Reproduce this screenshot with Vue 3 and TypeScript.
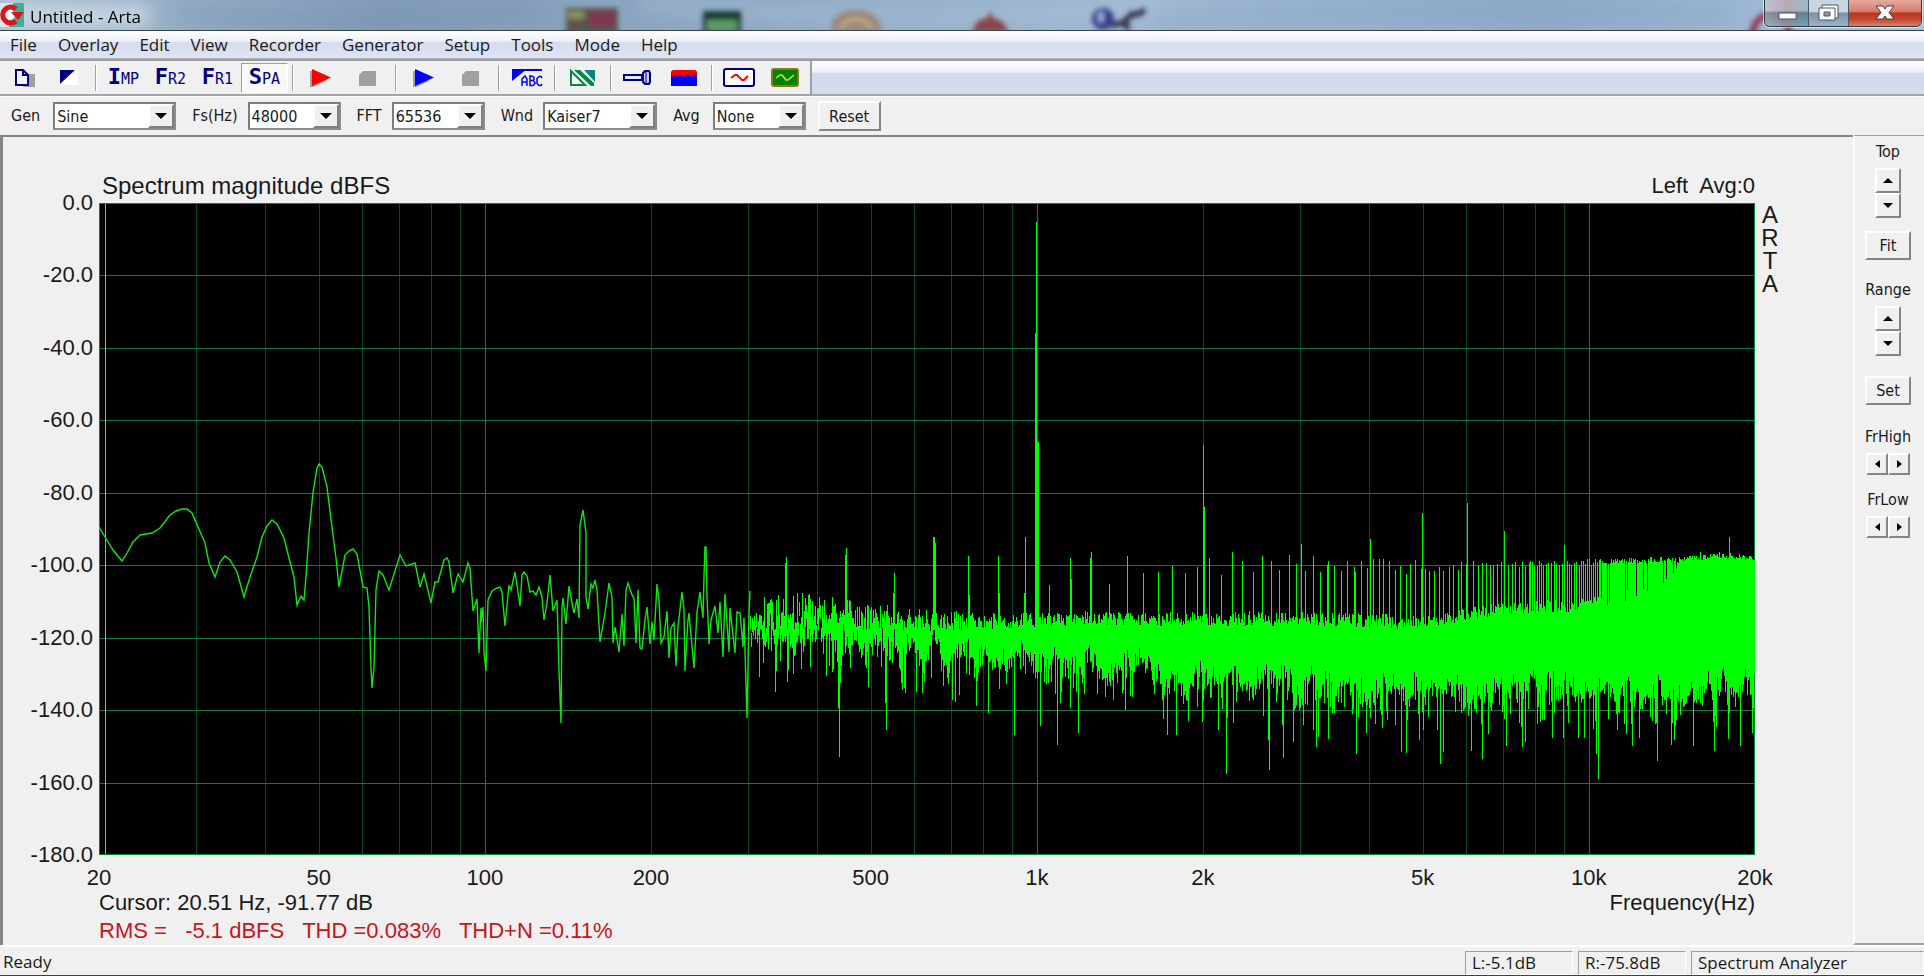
<script setup lang="ts">
import { ref } from 'vue'

const menus = ['File', 'Overlay', 'Edit', 'View', 'Recorder', 'Generator', 'Setup', 'Tools', 'Mode', 'Help']

type Tool = { id: string; label: string; big?: string; small?: string; pressed?: boolean }
const toolGroups: Tool[][] = [
  [{ id: 'copy', label: 'Copy' }, { id: 'invert', label: 'Black and white background' }],
  [
    { id: 'imp', label: 'Impulse response', big: 'I', small: 'MP' },
    { id: 'fr2', label: 'Two channel response', big: 'F', small: 'R2' },
    { id: 'fr1', label: 'Single channel response', big: 'F', small: 'R1' },
    { id: 'spa', label: 'Spectrum analyzer', big: 'S', small: 'PA', pressed: true },
  ],
  [{ id: 'rec', label: 'Start recording' }, { id: 'stop', label: 'Stop recording' }],
  [{ id: 'play', label: 'Start generator' }, { id: 'stop', label: 'Stop generator' }],
  [{ id: 'abc', label: 'Weighting' }],
  [{ id: 'cal', label: 'Calibration' }],
  [{ id: 'mic', label: 'Microphone' }, { id: 'level', label: 'Level meter' }],
  [{ id: 'signal', label: 'Signal' }, { id: 'scope', label: 'Scope' }],
]

const combos = ref([
  { id: 'gen', label: 'Gen', value: 'Sine', options: ['Sine', 'White PN', 'Pink PN'] },
  { id: 'fs', label: 'Fs(Hz)', value: '48000', options: ['44100', '48000', '96000'] },
  { id: 'fft', label: 'FFT', value: '65536', options: ['16384', '32768', '65536'] },
  { id: 'wnd', label: 'Wnd', value: 'Kaiser7', options: ['Uniform', 'Hanning', 'Kaiser7'] },
  { id: 'avg', label: 'Avg', value: 'None', options: ['None', 'Linear', 'Exp'] },
])

const channelText = 'Left  Avg:0'
const brandText = 'A\nR\nT\nA'
const distortionText = 'RMS =   -5.1 dBFS   THD =0.083%   THD+N =0.11%'

const W = 1656
const H = 652
const fx = (f: number): number => (Math.log10(f / 20) / 3) * W
const freqTicks = [
  { f: 20, t: '20' }, { f: 50, t: '50' }, { f: 100, t: '100' }, { f: 200, t: '200' }, { f: 500, t: '500' },
  { f: 1000, t: '1k' }, { f: 2000, t: '2k' }, { f: 5000, t: '5k' }, { f: 10000, t: '10k' }, { f: 20000, t: '20k' },
]
const levelTicks = [0, 20, 40, 60, 80, 100, 120, 140, 160, 180]
const minorFreqs: number[] = []
for (const d of [10, 100, 1000, 10000]) {
  for (let k = 2; k < 10; k++) {
    const f = d * k
    if (f > 20 && f < 20000) minorFreqs.push(f)
  }
}
const crisp = (v: number): number => Math.round(v) + 0.5
const minorPath = minorFreqs.map((f) => `M${crisp(fx(f))} 0V${H}`).join('')
const majorPath =
  [100, 1000, 10000].map((f) => `M${crisp(fx(f))} 0V${H}`).join('') +
  levelTicks.slice(1, -1).map((l) => `M0 ${crisp((l / 180) * H)}H${W}`).join('')

// Low-frequency bins, wide enough apart to be drawn one by one.
const lowBins =
  '0,324 6,334 14,347 23,358 28,350 34,339 41,332 53,330 61,325 71,312 77,308 83,306 88,306 93,310 99,324 106,340 110,360 116,374 ' +
  '121,359 126,353 131,357 138,369 145,394 151,374 158,354 163,334 168,323 173,317 178,321 185,335 191,359 195,374 198,402 ' +
  '202,393 205,397 207,374 210,330 214,290 218,265 220,261 223,264 228,284 233,324 237,355 240,384 246,352 250,348 254,346 258,351 ' +
  '264,384 268,385 270,404 272,465 273,485 275,464 277,387 280,368 284,372 290,387 301,352 307,363 316,360 321,384 325,371 ' +
  '332,400 336,379 339,379 345,357 348,355 350,359 354,390 359,371 364,379 369,360 371,365 374,408 378,396 380,450 382,405 ' +
  '382,420 384,404 385,450 387,468 389,397 393,388 398,385 401,384 403,389 406,423 410,382 412,387 416,369 421,403 423,372 ' +
  '425,369 428,373 431,389 434,388 437,392 440,384 443,394 445,417 448,400 451,372 454,408 458,397 460,467 462,520 463,404 ' +
  '464,395 467,421 470,383 473,400 475,410 478,396 480,415 481,322 483,312 484,307 487,330 487,394 489,406 492,381 494,385 ' +
  '496,377 498,387 501,439 506,410 510,380 513,394 514,440 516,424 520,449 523,411 525,443 527,387 529,380 533,392 535,395 ' +
  '537,440 539,387 541,445 543,446 546,417 548,404 551,441 553,419 555,437 558,381 560,397 562,440 565,434 568,408 570,455 ' +
  '572,425 575,420 577,463 579,424 583,389 585,407 586,468 589,417 590,410 595,465 598,409 601,389 604,415 605,374 606,344 ' +
  '607,344 608,392 610,441 612,417 616,403 619,430 621,399 624,454 626,391 630,449 631,405 636,450 638,409 641,410 644,444 ' +
  '645,415 648,515 650,410 651,388'

// Above that several bins share a pixel column; each column is a vertical run.
type Curve = [number, number][]
const topCurve: Curve = [[651, 408], [700, 402], [760, 408], [830, 414], [900, 416], [1000, 412], [1050, 414], [1150, 413], [1281, 415], [1305, 419], [1350, 412], [1405, 404], [1465, 401], [1500, 396], [1545, 388], [1570, 374], [1582, 355], [1621, 350], [1656, 354]]
const solidCurve: Curve = [[651, 434], [700, 436], [760, 442], [850, 450], [940, 456], [1000, 464], [1100, 474], [1200, 480], [1281, 484], [1400, 488], [1500, 492], [1656, 486]]
const combCurve: Curve = [[1296, 360], [1380, 361], [1490, 358], [1581, 355], [1621, 351], [1656, 355]]
const at = (c: Curve, x: number): number => {
  for (let i = 1; i < c.length; i++) {
    if (x <= c[i][0]) {
      const [x0, y0] = c[i - 1]
      return y0 + ((c[i][1] - y0) * (x - x0)) / (c[i][0] - x0)
    }
  }
  return c[c.length - 1][1]
}
let seed = 48271
const rnd = (): number => {
  seed = (seed * 16807) % 2147483647
  return seed / 2147483647
}

const peaks: Curve = [[687, 354], [686, 360], [747, 345], [746, 352], [795, 370], [794, 390], [835, 334], [834, 334], [836, 340], [869, 353], [870, 392], [899, 353], [900, 390], [925, 390], [926, 334], [950, 382], [971, 355], [972, 376], [991, 355], [992, 349], [1010, 381], [1028, 353], [1044, 370], [1059, 369], [1073, 363], [1086, 370], [1098, 364], [1104, 242], [1105, 304], [1110, 355], [1122, 372], [1133, 349], [1143, 358], [1154, 369], [1163, 353], [1172, 358], [1180, 367], [1190, 352], [1197, 361], [1202, 341], [1206, 368], [1214, 353], [1221, 369], [1228, 362], [1229, 358], [1235, 363], [1242, 368], [1248, 358], [1255, 364], [1256, 369], [1262, 358], [1268, 365], [1271, 336], [1274, 356], [1280, 356], [1284, 356], [1290, 358], [1296, 367], [1301, 363], [1307, 371], [1311, 361], [1316, 357], [1322, 366], [1323, 310], [1326, 366], [1330, 368], [1335, 368], [1340, 364], [1344, 368], [1350, 364], [1354, 362], [1359, 367], [1362, 359], [1367, 361], [1368, 300], [1374, 358], [1405, 328], [1431, 358], [1465, 342], [1601, 349], [1630, 334]]
const notches: Curve = [[660, 474], [676, 489], [677, 468], [688, 479], [727, 473], [739, 505], [740, 554], [741, 480], [769, 484], [786, 500], [787, 527], [805, 485], [806, 490], [817, 489], [832, 475], [848, 475], [856, 499], [877, 503], [889, 510], [915, 532], [941, 523], [958, 542], [979, 530], [1026, 507], [1068, 532], [1077, 532], [1103, 519], [1119, 527], [1127, 571], [1134, 520], [1169, 537], [1170, 567], [1183, 522], [1184, 555], [1194, 539], [1214, 527], [1217, 544], [1229, 536], [1257, 551], [1283, 525], [1296, 522], [1302, 549], [1307, 550], [1320, 537], [1341, 561], [1344, 549], [1372, 548], [1383, 556], [1389, 531], [1407, 543], [1423, 544], [1426, 539], [1453, 535], [1464, 535], [1479, 535], [1485, 535], [1497, 551], [1499, 576], [1527, 531], [1533, 543], [1540, 535], [1558, 558], [1572, 542], [1575, 537], [1594, 543], [1615, 548], [1629, 536], [1641, 543], [1653, 530]]
const peakAt = new Map<number, number>(peaks)
const notchAt = new Map<number, number>(notches)

const columns: string[] = []
let nextComb = 1379
let wander = 0
for (let x = 651; x < W; x++) {
  const sparse = Math.max(0, (900 - x) / 250)
  wander = wander * 0.82 + (rnd() - 0.5) * 16
  let top = at(topCurve, x) + (rnd() - 0.35) * (x < 1280 ? 15 + sparse * 26 : x < 1560 ? 13 : 4)
  let bottom = at(solidCurve, x) - 10 + wander + rnd() * 18
  if (rnd() < 0.34) bottom += rnd() * 32
  if (rnd() < sparse * 0.4) bottom -= 14
  if (x === nextComb) {
    top = at(combCurve, x) + rnd() * 6 - 2
    nextComb += x < 1430 ? (rnd() < 0.6 ? 4 : 3) : x < 1480 ? (rnd() < 0.6 ? 2 : 3) : x < 1500 ? 2 : rnd() < 0.75 ? 1 : 2
  }
  top = Math.min(top, peakAt.get(x) ?? top)
  bottom = Math.max(bottom, notchAt.get(x) ?? bottom, top + 14)
  columns.push(`M${x} ${Math.round(top)}h1V${Math.round(bottom)}h-1z`)
}
const columnPath = columns.join('')
</script>

<template>
  <div class="window">
    <header class="titlebar">
      <svg class="backdrop" viewBox="0 0 1924 30" preserveAspectRatio="none" aria-hidden="true">
        <defs>
          <linearGradient id="sky" x1="0" x2="1" y1="0" y2="0">
            <stop offset="0" stop-color="#a6bdd0" />
            <stop offset="0.12" stop-color="#8fa9c2" />
            <stop offset="0.2" stop-color="#829cb9" />
            <stop offset="0.4" stop-color="#90aac4" />
            <stop offset="0.6" stop-color="#a0b9d2" />
            <stop offset="0.8" stop-color="#8fabc9" />
            <stop offset="1" stop-color="#a8c2da" />
          </linearGradient>
          <filter id="soft" x="-20%" y="-50%" width="140%" height="200%"><feGaussianBlur stdDeviation="2.8" /></filter>
          <filter id="softer" x="-20%" y="-80%" width="140%" height="260%"><feGaussianBlur stdDeviation="9" /></filter>
        </defs>
        <rect width="1924" height="30" fill="url(#sky)" />
        <g filter="url(#softer)">
          <rect x="0" y="5" width="150" height="22" fill="#d8e4ec" opacity=".75" />
          <path d="M180 14q160 14 360-2" stroke="#7189a6" stroke-width="9" fill="none" opacity=".5" />
          <path d="M640 4q260 22 520 4" stroke="#b6cbdd" stroke-width="8" fill="none" opacity=".6" />
          <path d="M1150 24q260-20 580-8" stroke="#7f9cbd" stroke-width="9" fill="none" opacity=".5" />
        </g>
        <g filter="url(#soft)">
          <rect x="566" y="8" width="52" height="26" fill="#5d5448" />
          <rect x="590" y="12" width="25" height="14" fill="#7d3552" />
          <rect x="568" y="11" width="16" height="8" fill="#8b9061" />
          <rect x="703" y="11" width="38" height="24" fill="#183a35" />
          <rect x="707" y="20" width="30" height="12" fill="#5f9a68" />
          <ellipse cx="856" cy="27" rx="25" ry="17" fill="#9b8880" />
          <path d="M840 28q16-18 32 0" stroke="#c4aa74" stroke-width="4" fill="none" />
          <path d="M972 32q4-14 16-14l2-8 3 8q12 2 15 14z" fill="#87474a" />
          <circle cx="1103" cy="19" r="11" fill="#34408a" />
          <path d="M1112 26q8-4 14-2l2 6M1124 22l8-8q8 2 12-5" stroke="#39354f" stroke-width="6" fill="none" />
          <ellipse cx="1101" cy="17" rx="3" ry="6" fill="#a2b2e6" />
          <circle cx="1771" cy="33" r="18" fill="none" stroke="#963d56" stroke-width="7" />
        </g>
      </svg>
      <svg class="app-icon" viewBox="0 0 24 24" aria-hidden="true">
        <rect width="24" height="24" fill="#dce9ea" />
        <path d="M13 0h11v24H9z" fill="#3fae9c" />
        <circle cx="10" cy="12" r="5" fill="#fff" />
        <path d="M16 18a8 8 0 1 1 0-12" fill="none" stroke="#e0141c" stroke-width="5" />
        <path d="M11 9h13l-6 8z" fill="#e0141c" />
      </svg>
      <h1>Untitled - Arta</h1>
      <div class="caption">
        <button class="cap min" type="button" aria-label="Minimize">
          <svg viewBox="0 0 44 27"><path d="M14 13h17v6H14z" fill="#fff" stroke="#4d5663" /></svg>
        </button>
        <button class="cap max" type="button" aria-label="Restore">
          <svg viewBox="0 0 44 27">
            <path d="M15 5h16v13H15z" fill="#fff" stroke="#4d5663" />
            <path d="M12 8h16v12H12z" fill="#fff" stroke="#4d5663" />
            <path d="M17 12h6v4h-6z" fill="#8b98aa" stroke="#4d5663" />
          </svg>
        </button>
        <button class="cap close" type="button" aria-label="Close">
          <svg viewBox="0 0 44 27"><path d="M13 6h7l2 3 2-3h7l-5 6.500 5 6.500h-7l-2-3-2 3h-7l5-6.500z" fill="#fff" stroke="#55383a" /></svg>
        </button>
      </div>
    </header>

    <nav class="menubar" aria-label="Main menu">
      <button v-for="m in menus" :key="m" type="button">{{ m }}</button>
    </nav>

    <div class="rebar">
      <div class="toolbar" role="toolbar" aria-label="Tools">
        <div v-for="(group, gi) in toolGroups" :key="gi" class="tool-group">
          <button v-for="(tool, ti) in group" :key="ti" type="button" class="tool" :class="{ pressed: tool.pressed, narrow: gi === 0, snug: gi > 5 }" :aria-label="tool.label">
            <span v-if="tool.big" class="word"><b>{{ tool.big }}</b>{{ tool.small }}</span>
            <svg v-else viewBox="0 0 34 20" aria-hidden="true">
              <template v-if="tool.id === 'copy'">
                <path d="M15 6h12v13H15z" fill="#a0a0a0" />
                <path d="M8 2h7l5 5v10H8z" fill="#f4f4fa" stroke="#000080" stroke-width="2" />
                <path d="M15 2v5h5" fill="none" stroke="#000080" stroke-width="2" />
              </template>
              <template v-else-if="tool.id === 'invert'">
                <path d="M8 2h18v15H8z" fill="#fff" />
                <path d="M8 2h15L8 16z" fill="#000080" />
              </template>
              <template v-else-if="tool.id === 'rec'">
                <path d="M6 3h3v16H6zM9 16l13-5v2L9 19z" fill="#a0a0a0" />
                <path d="M8 1l19 8.500L8 18z" fill="#f00" />
              </template>
              <template v-else-if="tool.id === 'play'">
                <path d="M6 3h3v16H6zM9 16l13-5v2L9 19z" fill="#a0a0a0" />
                <path d="M8 1l19 8.500L8 18z" fill="#00f" />
              </template>
              <path v-else-if="tool.id === 'stop'" d="M12 3h13v15H8V7z" fill="#a0a0a0" />
              <template v-else-if="tool.id === 'abc'">
                <path d="M2 1h30v2H2zM2 1h15L2 13z" fill="#00f" />
                <g fill="none" stroke="#00f" stroke-width="1.500">
                  <path d="M12 18v-7l3-3 2 3v7M12 14h5M20 8v9.500h3l2-2v-1l-2-2h-3h3l1-1v-2l-1-1zM32 10l-1-1.500h-2l-2 2v5l2 2h2l1-1.500" />
                </g>
              </template>
              <template v-else-if="tool.id === 'cal'">
                <path d="M5 3v14h14z" fill="#fff" stroke="#008a40" stroke-width="2" />
                <path d="M11 2h3l14 13v3h-3L8 2z" fill="#008a40" />
                <path d="M18 2h11v12z" fill="#128080" />
              </template>
              <template v-else-if="tool.id === 'mic'">
                <path d="M3 7h18v5H3z" fill="#e8eaff" stroke="#000080" stroke-width="2" />
                <path d="M22 5l2-2h4l1 2v9l-1 2h-4l-2-2z" fill="#c9ceef" stroke="#000080" stroke-width="2" />
                <path d="M25 4v11" stroke="#000080" />
              </template>
              <template v-else-if="tool.id === 'level'">
                <path d="M4 4l2-2h22l2 2v14H4z" fill="#00f" />
                <path d="M4 4l2-2h22l2 2v5l-3-3-3 3-3-3-3 2-2 1-3-3-3 3-2-2-3 2z" fill="#f00" />
              </template>
              <template v-else-if="tool.id === 'signal'">
                <rect x="2" y="1" width="30" height="17" rx="2" fill="#fff" stroke="#000080" stroke-width="2" />
                <path d="M9 10l4-3h2l5 5h2l4-4" fill="none" stroke="#f00" stroke-width="2" />
              </template>
              <template v-else>
                <rect x="4" y="1" width="26" height="17" rx="2" fill="#008000" stroke="#8a7a10" stroke-width="2" />
                <path d="M8 10l4-3h2l4 5h2l6-5" fill="none" stroke="#d8e820" stroke-width="1.500" />
              </template>
            </svg>
          </button>
        </div>
      </div>
    </div>

    <form class="dialogbar" @submit.prevent>
      <template v-for="c in combos" :key="c.id">
        <label :for="c.id">{{ c.label }}</label>
        <span class="combo" :class="c.id">
          <select :id="c.id" v-model="c.value">
            <option v-for="o in c.options" :key="o">{{ o }}</option>
          </select>
          <span class="drop" aria-hidden="true"><svg viewBox="0 0 12 6"><path d="M0 0h12L6 6z" /></svg></span>
        </span>
      </template>
      <button class="raised reset" type="button">Reset</button>
    </form>

    <main class="workspace">
      <section class="chart" aria-label="Spectrum">
        <div class="heading">
          <h2>Spectrum magnitude dBFS</h2>
          <span class="pre">{{ channelText }}</span>
        </div>
        <div class="levels">
          <span v-for="l in levelTicks" :key="l" :style="{ top: (l / 180) * 100 + '%' }">{{ (l ? '-' : '') + l.toFixed(1) }}</span>
        </div>
        <div class="plot">
          <svg :viewBox="`0 0 ${W} ${H}`" preserveAspectRatio="none" role="img" aria-label="Spectrum magnitude trace">
            <g fill="none" shape-rendering="crispEdges">
              <path :d="minorPath" stroke="#0e4521" />
              <path :d="majorPath" stroke="#0e7a3b" />
              <path d="M6.500 0V652" stroke="#b8a850" />
              <path :d="`M0.500 0.500H${W - 0.5}V${H - 0.5}H0.500Z`" stroke="#008a3c" />
            </g>
            <polyline :points="lowBins" fill="none" stroke="#12e612" stroke-width="1.400" />
            <path :d="columnPath" fill="#0f0" shape-rendering="crispEdges" />
            <path d="M936 469V130h1V19h1V239h2V469z" fill="#0f0" shape-rendering="crispEdges" />
          </svg>
        </div>
        <div class="brand pre">{{ brandText }}</div>
        <div class="freqs">
          <span v-for="t in freqTicks" :key="t.f" :style="{ left: (fx(t.f) / W) * 100 + '%' }">{{ t.t }}</span>
        </div>
        <div class="readout">
          <span>Cursor: 20.51 Hz, -91.77 dB</span>
          <span>Frequency(Hz)</span>
        </div>
        <p class="distortion pre">{{ distortionText }}</p>
      </section>

      <aside class="side">
        <span class="cap-label">Top</span>
        <div class="spin vertical">
          <button class="raised" type="button" aria-label="Top up"><svg viewBox="0 0 10 5"><path d="M0 5h10L5 0z" /></svg></button>
          <button class="raised" type="button" aria-label="Top down"><svg viewBox="0 0 10 5"><path d="M0 0h10L5 5z" /></svg></button>
        </div>
        <button class="raised fit" type="button">Fit</button>
        <span class="cap-label range">Range</span>
        <div class="spin vertical">
          <button class="raised" type="button" aria-label="Range up"><svg viewBox="0 0 10 5"><path d="M0 5h10L5 0z" /></svg></button>
          <button class="raised" type="button" aria-label="Range down"><svg viewBox="0 0 10 5"><path d="M0 0h10L5 5z" /></svg></button>
        </div>
        <button class="raised set" type="button">Set</button>
        <span class="cap-label high">FrHigh</span>
        <div class="spin">
          <button class="raised" type="button" aria-label="High limit down"><svg class="h" viewBox="0 0 5 8"><path d="M5 0v8L0 4z" /></svg></button>
          <button class="raised" type="button" aria-label="High limit up"><svg class="h" viewBox="0 0 5 8"><path d="M0 0v8l5-4z" /></svg></button>
        </div>
        <span class="cap-label low">FrLow</span>
        <div class="spin">
          <button class="raised" type="button" aria-label="Low limit down"><svg class="h" viewBox="0 0 5 8"><path d="M5 0v8L0 4z" /></svg></button>
          <button class="raised" type="button" aria-label="Low limit up"><svg class="h" viewBox="0 0 5 8"><path d="M0 0v8l5-4z" /></svg></button>
        </div>
      </aside>
    </main>

    <footer class="status">
      <span class="ready">Ready</span>
      <span class="pane">L:-5.1dB</span>
      <span class="pane">R:-75.8dB</span>
      <span class="pane wide">Spectrum Analyzer</span>
    </footer>
  </div>
</template>

<style>
html,
body {
  margin: 0;
}
</style>

<style scoped>
.window {
  box-sizing: border-box;
  display: flex;
  flex-direction: column;
  min-height: 100vh;
  background: #f0f0f0;
  color: #1a1a1a;
  font-family: "DejaVu Sans Condensed", "DejaVu Sans", sans-serif;
  font-size: 16px;
}
.window *,
.window *::before {
  box-sizing: border-box;
}
button,
select {
  font: inherit;
  color: inherit;
  margin: 0;
  padding: 0;
  border: 0;
  background: none;
  border-radius: 0;
}

/* Title bar */
.titlebar {
  position: relative;
  display: flex;
  align-items: center;
  height: 31px;
  border-bottom: 1px solid #36424e;
  overflow: hidden;
}
.backdrop {
  position: absolute;
  inset: 0;
  width: 100%;
  height: 100%;
}
.app-icon {
  position: relative;
  width: 24px;
  height: 24px;
}
.titlebar h1 {
  position: relative;
  margin: 0 auto 0 6px;
  padding-top: 4px;
  font: 400 17px/24px "Open Sans", "Noto Sans", sans-serif;
  color: #000;
}
.caption {
  position: relative;
  display: flex;
  align-self: flex-start;
  height: 27px;
  margin-right: 2px;
  border: 1px solid #303a47;
  border-top: 0;
  border-radius: 0 0 6px 6px;
  overflow: hidden;
  box-shadow: 0 0 0 1px rgba(255, 255, 255, 0.6);
}
.cap {
  display: flex;
  justify-content: center;
  width: 44px;
  border-right: 1px solid #4c5866;
  background: linear-gradient(#c9d5e0 0 45%, #7d91a7 50%, #9ab2c8);
}
.cap svg {
  flex: none;
  width: 44px;
  height: 27px;
}
.min {
  background: linear-gradient(90deg, #b8aebc66, #9d586b55, #3e8d9b55), linear-gradient(#c6d2dc 0 40%, #687f90 50%, #8ab0bd);
}
.max {
  width: 40px;
}
.close {
  width: 72px;
  border-right: 0;
  background: linear-gradient(#e5aa9d, #d67b6b 45%, #bd3421 50%, #c44a30 75%, #dc8262);
}

/* Menu */
.menubar {
  display: flex;
  gap: 21px;
  height: 28px;
  padding: 0 10px;
  border-bottom: 1px solid #b0b3ba;
  background: linear-gradient(#ffffff, #eef1f9 38%, #d6dcee 42%, #dfe4f5);
}
.menubar button {
  font: 400 17px/24px "Open Sans", "Noto Sans", sans-serif;
}

/* Toolbar */
.rebar {
  display: flex;
  height: 37px;
  border-top: 2px solid #9c9c9c;
  border-bottom: 2px solid #a4a5a8;
  background: linear-gradient(#ffffff, #eaeff8 34%, #d1d9ec 38%, #d4dcf0);
}
.toolbar {
  display: flex;
  padding: 0 2px 0 3px;
  background: #f0f0f0;
  border-right: 2px solid #a0a0a0;
}
.tool-group {
  display: flex;
  padding-top: 2px;
}
.tool-group + .tool-group::before {
  content: "";
  width: 9px;
  height: 26px;
  margin-top: 2px;
  background: linear-gradient(90deg, transparent 4px, #a0a0a0 4px 5px, #fff 5px 6px, transparent 6px);
}
.tool {
  display: grid;
  place-items: center;
  width: 47px;
  height: 30px;
  border: 1px solid transparent;
}
.tool.narrow {
  width: 44px;
}
.tool.snug {
  width: 46px;
}
.tool.pressed {
  border-color: #a0a0a0 #fff #fff #a0a0a0;
  background: #f8f8f8;
}
.tool svg {
  width: 34px;
  height: 20px;
}
.word {
  font: 400 15px/26px "DejaVu Sans Mono", monospace;
  color: #000080;
}
.word b {
  font-size: 22px;
}

/* Dialog bar */
.dialogbar {
  display: flex;
  align-items: center;
  height: 39px;
  padding-left: 11px;
  border-top: 1px solid #fff;
}
.dialogbar label {
  line-height: 20px;
}
.combo {
  display: grid;
  grid-template-columns: 1fr 26px;
  width: 93px;
  height: 28px;
  margin: 0 16px 0 10px;
  border: 2px solid;
  border-color: #7c7c7c #8c8c8c #8c8c8c #7c7c7c;
  background: #fff;
}
.combo select {
  grid-area: 1 / 1 / 2 / 3;
  width: 100%;
  height: 24px;
  padding-left: 2px;
  appearance: none;
}
.drop {
  grid-area: 1 / 2 / 2 / 3;
  display: grid;
  place-items: center;
  border: 2px solid;
  border-color: #fff #808080 #808080 #fff;
  background: #f0f0f0;
  pointer-events: none;
}
.drop svg {
  width: 12px;
  height: 6px;
}
.combo.gen {
  width: 123px;
  margin-left: 13px;
}
.combo.wnd {
  width: 114px;
}
.combo.avg {
  margin: 0 12px 0 13px;
}
.raised {
  display: grid;
  place-items: center;
  border: 2px solid;
  border-color: #fff #858585 #858585 #fff;
  background: #f0f0f0;
}
.reset {
  width: 63px;
  height: 30px;
}

/* Chart */
.workspace {
  display: flex;
  flex: 1;
}
.chart {
  flex: 1;
  display: grid;
  grid-template: 66px 1fr 34px 28px 28px / 96px 1fr 98px;
  border: 2px solid;
  border-color: #858585 #fff #fff #858585;
  border-left-width: 3px;
  border-right-width: 0;
  border-bottom-width: 0;
  font-family: "Liberation Sans", Arial, sans-serif;
  font-size: 22px;
}
.pre {
  white-space: pre;
}
.heading {
  grid-area: 1 / 2;
  display: flex;
  justify-content: space-between;
  align-items: flex-end;
  line-height: 34px;
}
.heading h2 {
  margin: 0 0 0 3px;
  font-size: 24px;
  font-weight: 400;
}
.levels {
  grid-area: 2 / 1;
  position: relative;
}
.levels span {
  position: absolute;
  right: 6px;
  line-height: 26px;
  margin-top: -13px;
}
.plot {
  grid-area: 2 / 2;
  min-height: 300px;
  position: relative;
  background: #000;
}
.plot svg {
  position: absolute;
  width: 100%;
  height: 100%;
}
.brand {
  grid-area: 2 / 3;
  width: 18px;
  margin-left: 6px;
  text-align: center;
  font-size: 24px;
  line-height: 23px;
}
.freqs {
  grid-area: 3 / 2;
  position: relative;
}
.freqs span {
  position: absolute;
  top: 10px;
  line-height: 26px;
  transform: translateX(-50%);
}
.readout {
  grid-area: 4 / 2;
  display: flex;
  justify-content: space-between;
  line-height: 28px;
}
.distortion {
  grid-area: 5 / 2;
  margin: 0;
  line-height: 28px;
  color: #c8141e;
}

/* Side panel */
.side {
  display: flex;
  flex-direction: column;
  align-items: center;
  width: 71px;
  padding: 6px 3px 0 0;
  border-top: 1px solid #a0a0a0;
  border-left: 2px solid #fff;
  border-bottom: 2px solid #a0a0a0;
}
.cap-label {
  line-height: 20px;
}
.cap-label.range {
  margin-top: 20px;
}
.cap-label.high {
  margin-top: 22px;
}
.cap-label.low {
  margin-top: 15px;
}
.spin {
  display: grid;
  grid-template-columns: 22px 22px;
  margin-top: 6px;
}
.spin .raised {
  height: 22px;
}
.spin.vertical {
  grid-template-columns: 26px;
}
.spin.vertical .raised {
  height: 25px;
}
.spin svg {
  width: 10px;
  height: 5px;
}
.spin svg.h {
  width: 5px;
  height: 8px;
}
.fit,
.set {
  width: 46px;
  height: 29px;
  margin-top: 13px;
}
.set {
  margin-top: 20px;
}

/* Status bar */
.status {
  display: flex;
  gap: 5px;
  height: 31px;
  padding: 4px 0 0 3px;
  border-top: 2px solid #fff;
  border-bottom: 1px solid #36424e;
  font: 400 17px/22px "Open Sans", "Noto Sans", sans-serif;
}
.ready {
  flex: 1;
}
.pane {
  width: 108px;
  padding-left: 6px;
  border: 1px solid;
  border-color: #a0a0a0 #fff #fff #a0a0a0;
}
.pane.wide {
  width: 233px;
}
</style>
